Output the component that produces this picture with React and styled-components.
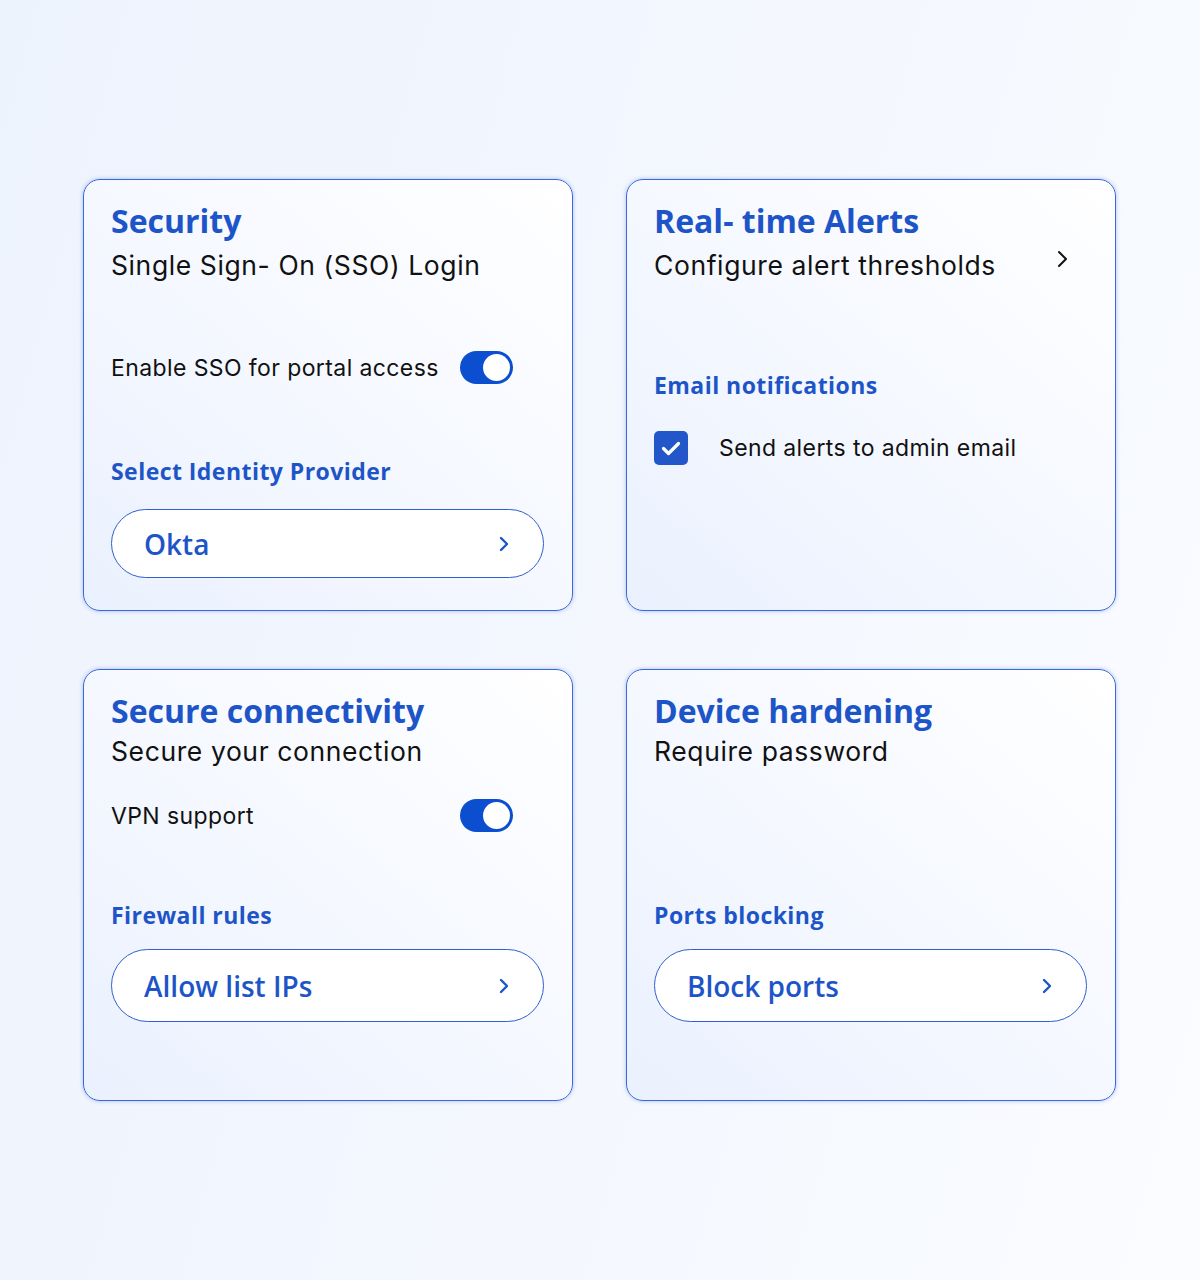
import styled, { createGlobalStyle } from "styled-components";

const GlobalStyle = createGlobalStyle`
  html, body {
    margin: 0;
    padding: 0;
  }
  body {
    font-family: "Inter", "Noto Sans", sans-serif;
    color: #111;
  }
`;

const Page = styled.div`
  min-height: 1280px;
  box-sizing: border-box;
  padding: 179px 0 0 83px;
  background: linear-gradient(105deg, #edf3fd 0%, #f4f7fe 55%, #fafcff 100%);
`;

const Grid = styled.div`
  display: grid;
  grid-template-columns: 490px 490px;
  grid-auto-rows: 432px;
  column-gap: 53px;
  row-gap: 58px;
`;

const Card = styled.div`
  box-sizing: border-box;
  display: flex;
  flex-direction: column;
  padding: 22px 28px 0 27px;
  border: 1.5px solid #3a69d8;
  border-radius: 17px;
  background: linear-gradient(40deg, #eaf1fe 0%, #f5f8ff 50%, #ffffff 100%);
  box-shadow: 0 0 4px rgba(61, 107, 216, 0.4);
`;

const Title = styled.h2`
  margin: 0;
  font-family: "Open Sans", sans-serif;
  font-weight: 700;
  font-size: 32px;
  line-height: 38px;
  color: #1d55c8;
`;

const SubRow = styled.div`
  display: flex;
  align-items: flex-start;
  justify-content: space-between;
  margin-top: ${(p) => p.$mt}px;
  padding-right: 18px;
`;

const Subtitle = styled.p`
  margin: 0;
  font-size: 26.5px;
  line-height: 32px;
  letter-spacing: 0.6px;
  color: #111;
`;

const SubChevron = styled.svg`
  margin-top: 1px;
  flex-shrink: 0;
`;

const ToggleRow = styled.div`
  width: 402px;
  display: flex;
  align-items: center;
  justify-content: space-between;
  margin-top: ${(p) => p.$mt}px;
`;

const RowText = styled.span`
  font-size: 23px;
  line-height: 28px;
  letter-spacing: 0.4px;
  color: #111;
`;

const Toggle = styled.span`
  position: relative;
  width: 53px;
  height: 33px;
  border-radius: 17px;
  background: #0b4ed0;
  flex-shrink: 0;

  &::after {
    content: "";
    position: absolute;
    top: 3px;
    right: 3px;
    width: 27px;
    height: 27px;
    border-radius: 50%;
    background: #fff;
  }
`;

const Label = styled.h3`
  margin: ${(p) => p.$mt}px 0 0 0;
  font-family: "Open Sans", sans-serif;
  font-weight: 700;
  font-size: 23px;
  line-height: 28px;
  letter-spacing: 0.45px;
  color: #1d55c8;
`;

const Pill = styled.button`
  box-sizing: border-box;
  width: 100%;
  height: ${(p) => p.$h}px;
  margin-top: ${(p) => p.$mt}px;
  display: flex;
  align-items: center;
  justify-content: space-between;
  padding: 0 34px 0 32px;
  border: 1.5px solid #2f5fd0;
  border-radius: 40px;
  background: #fff;
  font-family: "Open Sans", sans-serif;
  font-weight: 600;
  font-size: 28px;
  color: #1d55c8;
  cursor: pointer;
`;

const CheckRow = styled.label`
  display: flex;
  align-items: center;
  gap: 31px;
  margin-top: 32px;
`;

const CheckBox = styled.span`
  width: 34px;
  height: 34px;
  border-radius: 5px;
  background: #2356c9;
  display: flex;
  align-items: center;
  justify-content: center;
  flex-shrink: 0;
`;

const PillChevron = () => (
  <svg width="10" height="16" viewBox="0 0 10 16" fill="none">
    <polyline points="2,2 8,8 2,14" stroke="#1d55c8" strokeWidth="2.4" strokeLinecap="round" strokeLinejoin="round" />
  </svg>
);

const SelectPill = ({ children, h = 69, mt = 24 }) => (
  <Pill $h={h} $mt={mt}>
    <span>{children}</span>
    <PillChevron />
  </Pill>
);

export default function App() {
  return (
    <>
      <GlobalStyle />
      <Page>
        <Grid>
          <Card>
            <Title>Security</Title>
            <SubRow $mt={9}>
              <Subtitle>Single Sign- On (SSO) Login</Subtitle>
            </SubRow>
            <ToggleRow $mt={70}>
              <RowText>Enable SSO for portal access</RowText>
              <Toggle />
            </ToggleRow>
            <Label $mt={73}>Select Identity Provider</Label>
            <SelectPill>Okta</SelectPill>
          </Card>

          <Card>
            <Title>Real- time Alerts</Title>
            <SubRow $mt={9}>
              <Subtitle>Configure alert thresholds</Subtitle>
              <SubChevron width="12" height="18" viewBox="0 0 12 18" fill="none">
                <polyline points="2,2 9,9 2,16" stroke="#111" strokeWidth="2" strokeLinecap="round" strokeLinejoin="round" />
              </SubChevron>
            </SubRow>
            <Label $mt={90}>Email notifications</Label>
            <CheckRow>
              <CheckBox>
                <svg width="20" height="15" viewBox="0 0 20 15" fill="none">
                  <polyline points="2.5,7.5 7.5,12.5 17.5,2.5" stroke="#fff" strokeWidth="3.2" strokeLinecap="round" strokeLinejoin="round" />
                </svg>
              </CheckBox>
              <RowText>Send alerts to admin email</RowText>
            </CheckRow>
          </Card>

          <Card>
            <Title>Secure connectivity</Title>
            <SubRow $mt={5}>
              <Subtitle>Secure your connection</Subtitle>
            </SubRow>
            <ToggleRow $mt={32}>
              <RowText>VPN support</RowText>
              <Toggle />
            </ToggleRow>
            <Label $mt={69}>Firewall rules</Label>
            <SelectPill h={73} mt={20}>Allow list IPs</SelectPill>
          </Card>

          <Card>
            <Title>Device hardening</Title>
            <SubRow $mt={5}>
              <Subtitle>Require password</Subtitle>
            </SubRow>
            <Label $mt={134}>Ports blocking</Label>
            <SelectPill h={73} mt={20}>Block ports</SelectPill>
          </Card>
        </Grid>
      </Page>
    </>
  );
}
